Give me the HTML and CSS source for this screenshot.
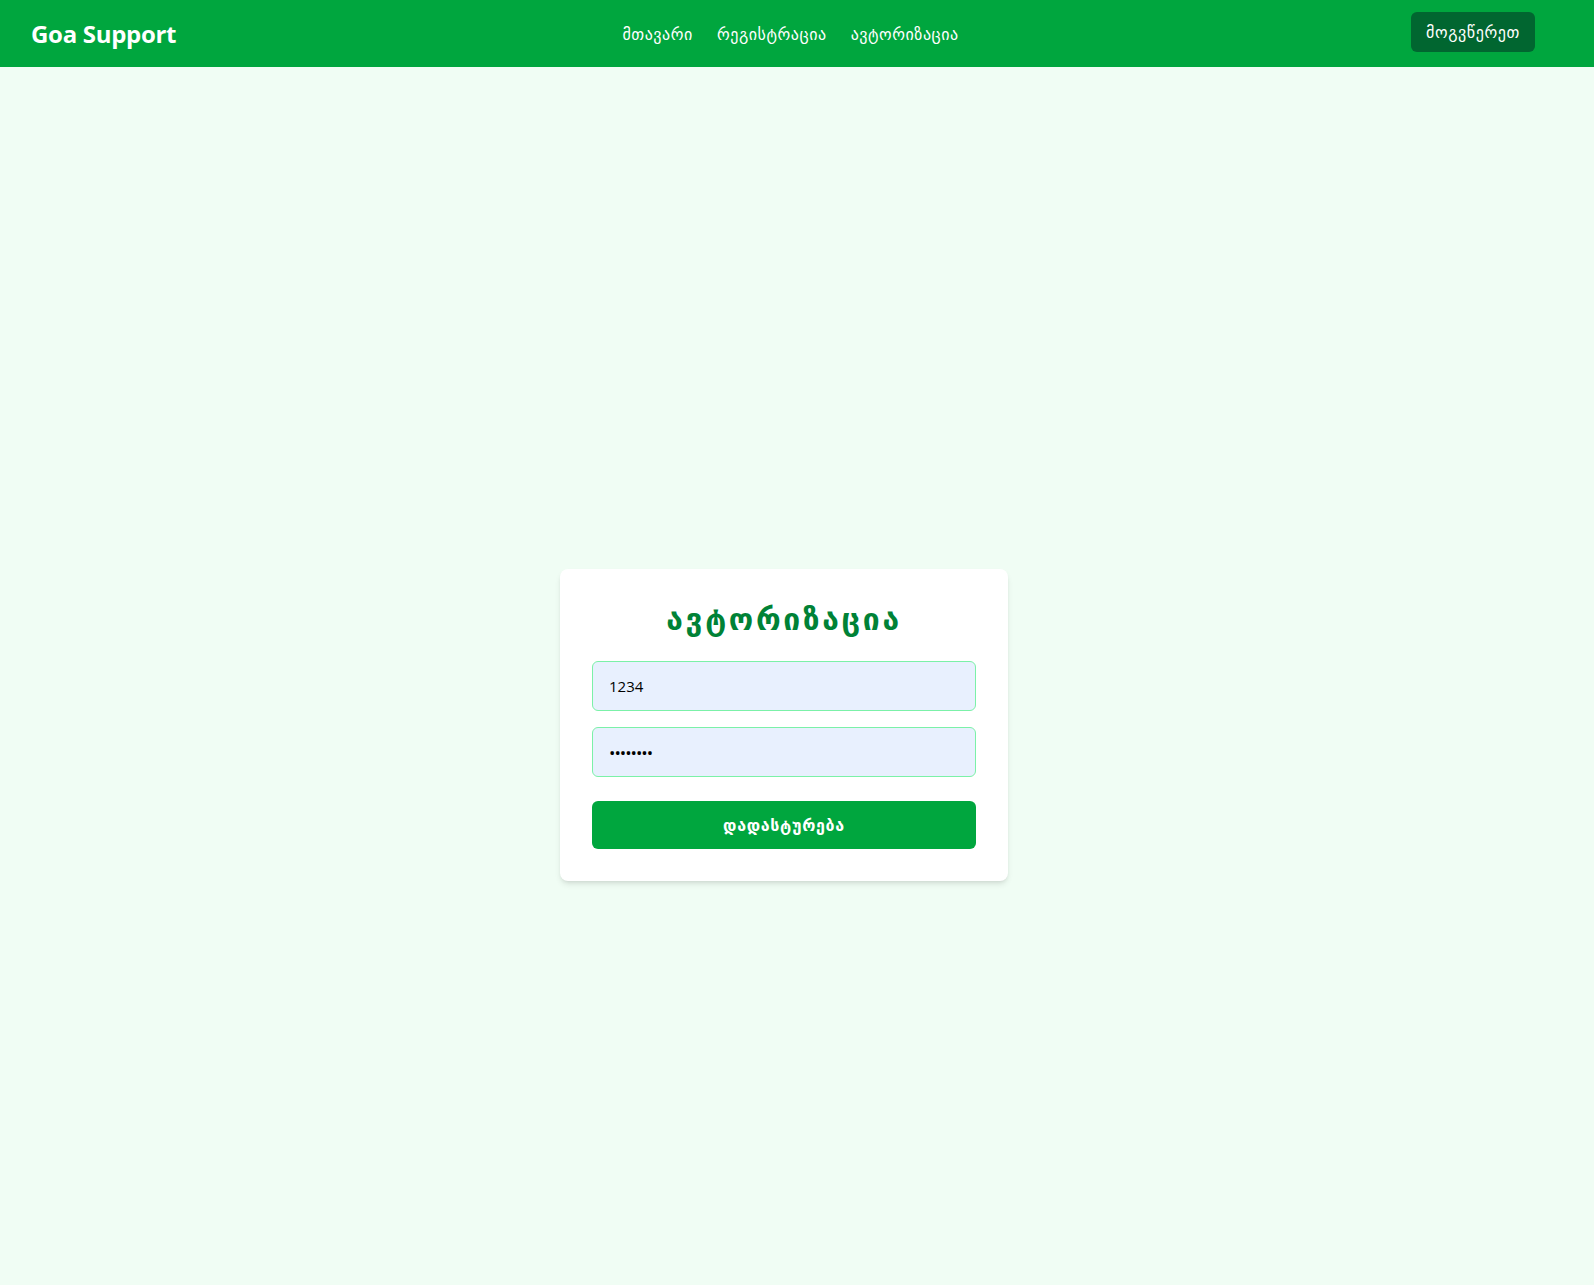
FILE: index.html
```html
<!DOCTYPE html>
<html lang="ka">
<head>
<meta charset="utf-8">
<title>Goa Support</title>
<link rel="stylesheet" href="styles.css">
</head>
<body>
<header class="topbar">
  <div class="logo">Goa Support</div>
  <nav class="nav">
    <a href="#">მთავარი</a>
    <a href="#">რეგისტრაცია</a>
    <a href="#">ავტორიზაცია</a>
  </nav>
  <button class="cta">მოგვწერეთ</button>
</header>
<main class="main">
  <form class="card">
    <h1 class="title">ავტორიზაცია</h1>
    <input class="field" type="text" value="1234">
    <input class="field pass" type="password" value="12345678">
    <button class="submit" type="button">დადასტურება</button>
  </form>
</main>
</body>
</html>
```
FILE: styles.css
```css
* { box-sizing: border-box; }
html, body { margin: 0; padding: 0; }
body {
  background: #f0fdf4;
  font-family: "Open Sans", "DejaVu Sans", sans-serif;
  color: #111;
}
.topbar {
  height: 67px;
  background: #00a63e;
  display: flex;
  align-items: center;
  justify-content: space-between;
  padding: 0 59px 0 31px;
}
.logo {
  color: #fff;
  font-size: 24px;
  font-weight: 700;
  letter-spacing: -0.3px;
}
.nav {
  display: flex;
  gap: 24px;
  margin-left: -6px;
}
.nav a {
  color: #fff;
  text-decoration: none;
  font-size: 16px;
  letter-spacing: 0.55px;
}
.cta {
  width: 124px;
  height: 40px;
  margin-top: -3px;
  border: none;
  border-radius: 6px;
  background: #016630;
  color: #fff;
  font-family: inherit;
  font-size: 16px;
  letter-spacing: 0.6px;
}
.main {
  height: calc(100vh - 67px);
  padding: 98px 26px 0 0;
  display: flex;
  align-items: center;
  justify-content: center;
}
.card {
  width: 448px;
  background: #fff;
  border-radius: 8px;
  box-shadow: 0 4px 6px -1px rgba(0,0,0,0.1), 0 2px 4px -2px rgba(0,0,0,0.1);
  padding: 32px;
  display: flex;
  flex-direction: column;
}
.title {
  margin: 0 0 24px;
  height: 36px;
  line-height: 36px;
  text-align: center;
  color: #008236;
  font-size: 30px;
  font-weight: 700;
  letter-spacing: 2.7px;
}
.field {
  height: 50px;
  border: 1px solid #7bf1a8;
  border-radius: 6px;
  background: #e8f0fe;
  padding: 0 16px;
  font-family: inherit;
  font-size: 15px;
  color: #000;
  margin-bottom: 16px;
}
.field.pass {
  margin-bottom: 24px;
  font-size: 17px;
  letter-spacing: -1px;
}
.submit {
  height: 48px;
  border: none;
  border-radius: 6px;
  background: #00a63e;
  color: #fff;
  font-family: inherit;
  font-size: 16px;
  font-weight: 600;
  letter-spacing: 0.7px;
}
```
